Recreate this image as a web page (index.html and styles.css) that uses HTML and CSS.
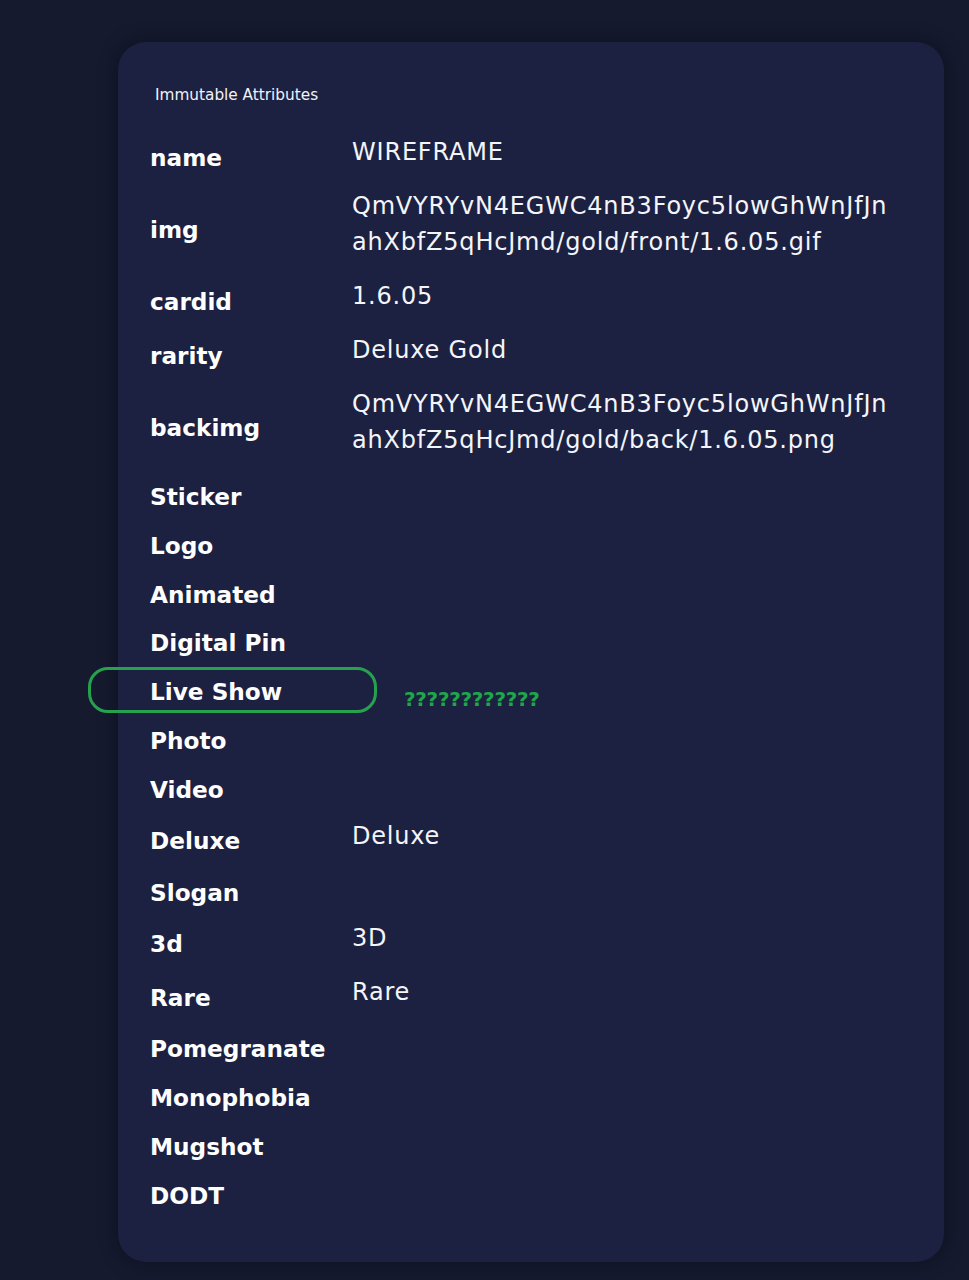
FILE: index.html
```html
<!DOCTYPE html>
<html lang="en">
<head>
<meta charset="utf-8">
<title>Immutable Attributes</title>
<link rel="stylesheet" href="styles.css">
</head>
<body>
<div class="card">
  <div class="title">Immutable Attributes</div>
  <div class="attrs">
    <div class="row"><div class="label">name</div><div class="value">WIREFRAME</div></div>
    <div class="row"><div class="label">img</div><div class="value">QmVYRYvN4EGWC4nB3Foyc5lowGhWnJfJn<br>ahXbfZ5qHcJmd/gold/front/1.6.05.gif</div></div>
    <div class="row"><div class="label">cardid</div><div class="value">1.6.05</div></div>
    <div class="row"><div class="label">rarity</div><div class="value">Deluxe Gold</div></div>
    <div class="row"><div class="label">backimg</div><div class="value">QmVYRYvN4EGWC4nB3Foyc5lowGhWnJfJn<br>ahXbfZ5qHcJmd/gold/back/1.6.05.png</div></div>
    <div class="row"><div class="label">Sticker</div></div>
    <div class="row"><div class="label">Logo</div></div>
    <div class="row"><div class="label">Animated</div></div>
    <div class="row"><div class="label">Digital Pin</div></div>
    <div class="row row-marked"><div class="label">Live Show</div><span class="oval"></span><span class="note">????????????</span></div>
    <div class="row"><div class="label">Photo</div></div>
    <div class="row"><div class="label">Video</div></div>
    <div class="row"><div class="label">Deluxe</div><div class="value">Deluxe</div></div>
    <div class="row"><div class="label">Slogan</div></div>
    <div class="row"><div class="label">3d</div><div class="value">3D</div></div>
    <div class="row"><div class="label">Rare</div><div class="value">Rare</div></div>
    <div class="row"><div class="label">Pomegranate</div></div>
    <div class="row"><div class="label">Monophobia</div></div>
    <div class="row"><div class="label">Mugshot</div></div>
    <div class="row"><div class="label">DODT</div></div>
  </div>
</div>
</body>
</html>
```
FILE: styles.css
```css
html, body {
  margin: 0;
  padding: 0;
  background: #151a2e;
}
body {
  font-family: "DejaVu Sans", sans-serif;
  color: #ffffff;
  padding: 42px 0 18px 118px;
}
.card {
  box-sizing: border-box;
  width: 826px;
  height: 1220px;
  background: #1d2141;
  border-radius: 28px;
  padding: 43px 32px 0 32px;
  box-shadow: 0 0 18px rgba(8, 10, 22, 0.6);
}
.title {
  font-size: 15.3px;
  line-height: 20px;
  padding-left: 5px;
  margin-bottom: 26px;
  color: #f2f3f8;
}
.attrs {
  display: flex;
  flex-direction: column;
}
.row {
  position: relative;
  display: grid;
  grid-template-columns: 202px 1fr;
  align-items: center;
  padding: 3px 0;
}
.label {
  font-weight: bold;
  font-size: 23.2px;
  line-height: 42.8px;
  white-space: nowrap;
}
.value {
  font-size: 24px;
  line-height: 36px;
  padding-bottom: 12px;
  letter-spacing: 0.8px;
  white-space: nowrap;
  color: #f4f5fa;
}
.oval {
  position: absolute;
  left: -62px;
  top: -1px;
  width: 289px;
  height: 46px;
  box-sizing: border-box;
  border: 3px solid #26a24e;
  border-radius: 20px;
}
.note {
  position: absolute;
  left: 254px;
  top: 20px;
  font-size: 20px;
  line-height: 22px;
  font-weight: bold;
  color: #1fa64a;
  letter-spacing: -0.3px;
}
```
